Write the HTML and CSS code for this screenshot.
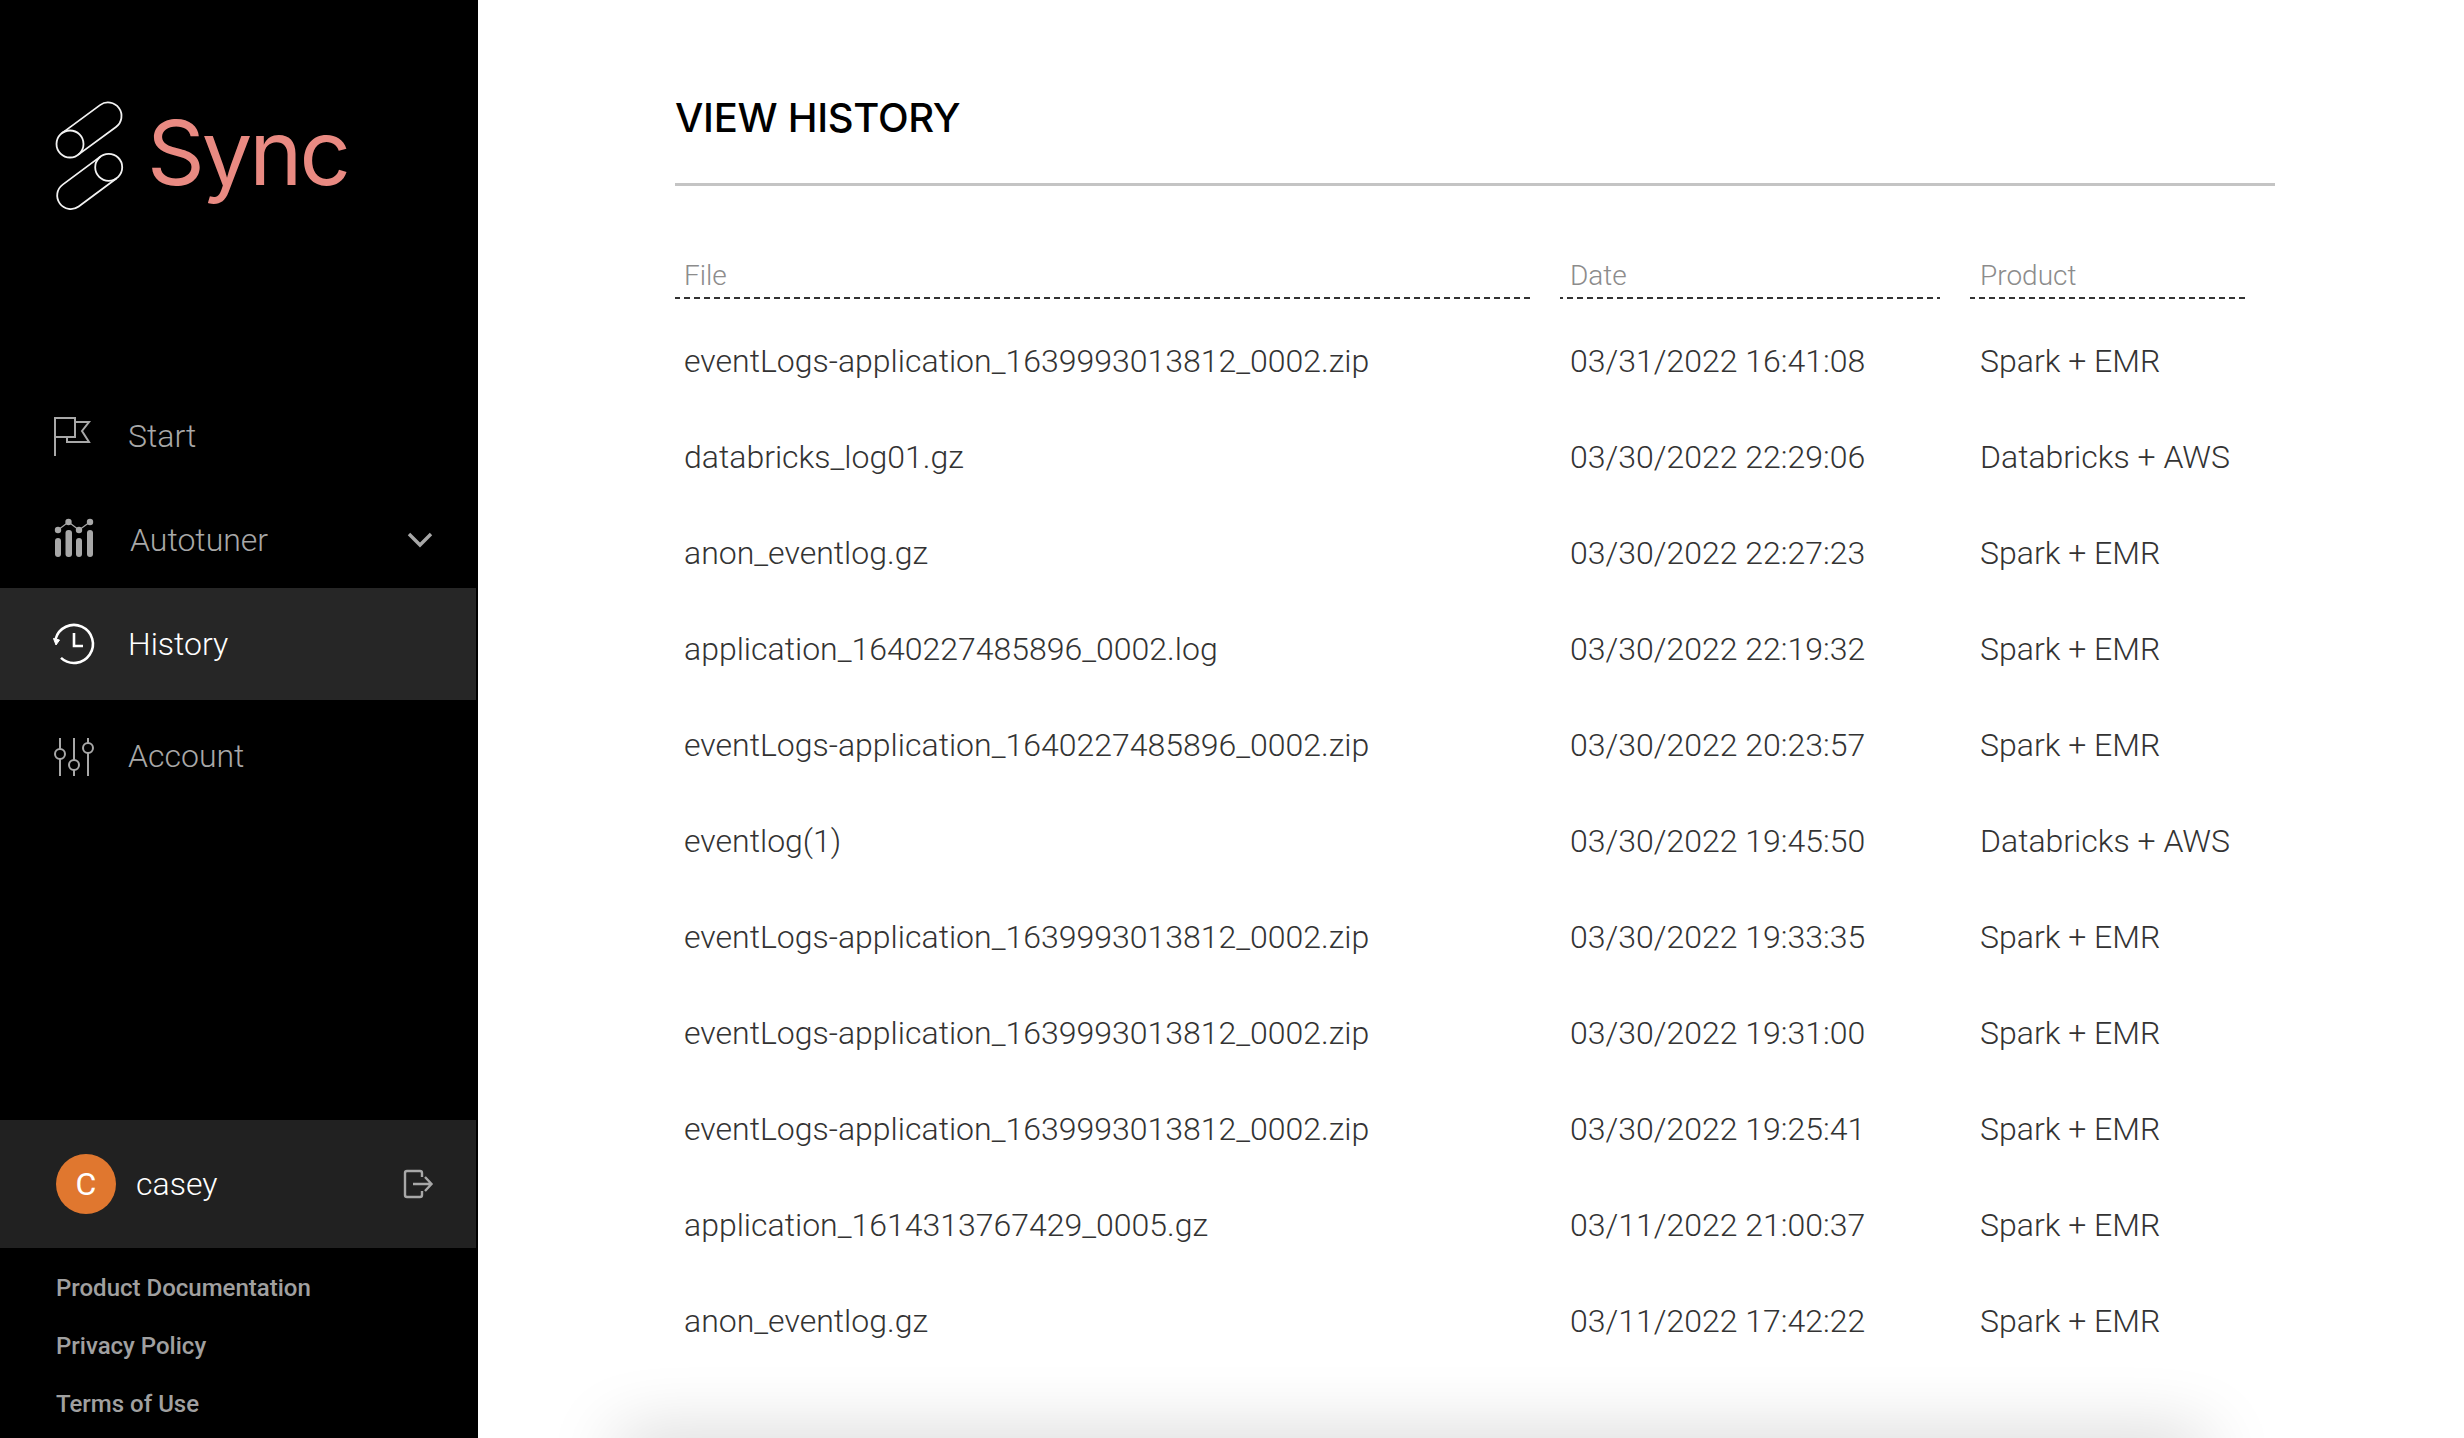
FILE: index.html
```html
<!DOCTYPE html>
<html lang="en">
<head>
    <meta charset="UTF-8">
    <meta name="viewport" content="width=device-width, initial-scale=1.0">
    <title>Sync - View History</title>
    <link rel="stylesheet" href="styles.css">
</head>
<body>
    <aside class="sidebar">
        <div class="logo">
            <svg class="logo-mark" width="90" height="126" viewBox="0 0 90 126" fill="none" stroke="#f2f2f2" stroke-width="1.8">
                <path d="M18 41.1 L56 13.1 A13.5 13.5 0 0 1 72 34.9 L34 62.9"/>
                <circle cx="26" cy="52" r="13.5"/>
                <path d="M56.7 64.4 L18.7 92.6 A13.5 13.5 0 0 0 34.7 114.4 L72.7 86.2"/>
                <circle cx="64.7" cy="75.3" r="13.5"/>
            </svg>
            <span class="logo-text">Sync</span>
        </div>

        <nav class="nav">
            <a class="nav-item nav-start">
                <svg width="60" height="60" viewBox="0 0 60 60" fill="none" stroke="currentColor" stroke-width="2">
                    <path d="M11 50 V12 H31 V31 H11"/>
                    <path d="M32 16 H45 L38 25 L45 36 H23 V31"/>
                </svg>
                <span>Start</span>
            </a>
            <a class="nav-item nav-tuner">
                <svg width="60" height="60" viewBox="0 0 60 60" fill="currentColor">
                    <rect x="11" y="28" width="6" height="19" rx="3"/>
                    <rect x="21.5" y="20" width="6.5" height="27" rx="3"/>
                    <rect x="32" y="28" width="6" height="19" rx="3"/>
                    <rect x="43" y="20" width="6" height="27" rx="3"/>
                    <path d="M14 20 L24.5 12 L35 20 L46 12" fill="none" stroke="currentColor" stroke-width="1.2"/>
                    <circle cx="14" cy="20" r="3.2"/>
                    <circle cx="24.5" cy="12" r="3.2"/>
                    <circle cx="35" cy="20" r="3.2"/>
                    <circle cx="46" cy="12" r="3.2"/>
                </svg>
                <span>Autotuner</span>
                <svg class="chevron" width="28" height="18" viewBox="0 0 28 18" fill="none" stroke="currentColor" stroke-width="3.4">
                    <path d="M3 3 L14 14 L25 3"/>
                </svg>
            </a>
            <a class="nav-item nav-active">
                <svg width="60" height="60" viewBox="0 0 60 60" fill="none" stroke="currentColor" stroke-width="2.6">
                    <path d="M11.6 25 A19 19 0 1 1 17 43.9"/>
                    <path d="M30 19 V32 H39"/>
                    <path d="M9.5 24.5 L15.5 26 L12 31 Z" fill="currentColor" stroke-width="1"/>
                </svg>
                <span>History</span>
            </a>
            <a class="nav-item">
                <svg width="60" height="60" viewBox="0 0 60 60" fill="none" stroke="currentColor" stroke-width="2">
                    <path d="M16 12 V23 M16 33 V50 M30 12 V34 M30 44 V50 M44 12 V17 M44 27 V50"/>
                    <circle cx="16" cy="28" r="5"/>
                    <circle cx="30" cy="39" r="5"/>
                    <circle cx="44" cy="22" r="5"/>
                </svg>
                <span>Account</span>
            </a>
        </nav>

        <div class="sidebar-bottom">
            <div class="user-bar">
                <div class="avatar">C</div>
                <span class="user-name">casey</span>
                <svg class="logout" width="50" height="50" viewBox="0 0 50 50" fill="none" stroke="#a8a8a8" stroke-width="2.4">
                    <path d="M28 17 V13 A2 2 0 0 0 26 11 H13 A2 2 0 0 0 11 13 V35 A2 2 0 0 0 13 37 H26 A2 2 0 0 0 28 35 V31"/>
                    <path d="M19 24 H37 M31 17 L37.5 24 L31 31"/>
                </svg>
            </div>
            <div class="links">
                <a>Product Documentation</a>
                <a>Privacy Policy</a>
                <a>Terms of Use</a>
            </div>
        </div>
    </aside>

    <main class="content">
        <h1>VIEW HISTORY</h1>
        <table class="history">
            <colgroup>
                <col class="col-file">
                <col class="col-date">
                <col class="col-product">
            </colgroup>
            <thead>
                <tr><th>File</th><th>Date</th><th>Product</th></tr>
            </thead>
            <tbody>
                <tr><td>eventLogs-application_1639993013812_0002.zip</td><td>03/31/2022 16:41:08</td><td>Spark + EMR</td></tr>
                <tr><td>databricks_log01.gz</td><td>03/30/2022 22:29:06</td><td>Databricks + AWS</td></tr>
                <tr><td>anon_eventlog.gz</td><td>03/30/2022 22:27:23</td><td>Spark + EMR</td></tr>
                <tr><td>application_1640227485896_0002.log</td><td>03/30/2022 22:19:32</td><td>Spark + EMR</td></tr>
                <tr><td>eventLogs-application_1640227485896_0002.zip</td><td>03/30/2022 20:23:57</td><td>Spark + EMR</td></tr>
                <tr><td>eventlog(1)</td><td>03/30/2022 19:45:50</td><td>Databricks + AWS</td></tr>
                <tr><td>eventLogs-application_1639993013812_0002.zip</td><td>03/30/2022 19:33:35</td><td>Spark + EMR</td></tr>
                <tr><td>eventLogs-application_1639993013812_0002.zip</td><td>03/30/2022 19:31:00</td><td>Spark + EMR</td></tr>
                <tr><td>eventLogs-application_1639993013812_0002.zip</td><td>03/30/2022 19:25:41</td><td>Spark + EMR</td></tr>
                <tr><td>application_1614313767429_0005.gz</td><td>03/11/2022 21:00:37</td><td>Spark + EMR</td></tr>
                <tr><td>anon_eventlog.gz</td><td>03/11/2022 17:42:22</td><td>Spark + EMR</td></tr>
            </tbody>
        </table>
        <div class="bottom-shadow"></div>
    </main>
</body>
</html>
```
FILE: styles.css
```css
* {
    margin: 0;
    padding: 0;
    box-sizing: border-box;
}

body {
    display: flex;
    height: 100vh;
    overflow: hidden;
    background-color: #FFFFFF;
    font-family: 'Roboto', sans-serif;
}

/* sidebar */
.sidebar {
    width: 478px;
    flex-shrink: 0;
    padding-right: 2px;
    display: flex;
    flex-direction: column;
    background-color: #000000;
}

.logo {
    height: 384px;
    padding: 92px 0 0 44px;
    display: flex;
    align-items: flex-start;
    gap: 13px;
}

.logo-text {
    margin-top: 11px;
    font-family: 'Inter', sans-serif;
    font-size: 90px;
    font-weight: 400;
    line-height: 100px;
    letter-spacing: -3px;
    color: #E98A82;
}

.nav-item {
    height: 112px;
    padding-left: 44px;
    display: flex;
    align-items: center;
    gap: 24px;
    font-size: 32px;
    font-weight: 300;
    color: #A8A8A8;
}

.nav-start {
    height: 104px;
}

.nav-tuner {
    height: 100px;
    padding-top: 3px;
    padding-right: 42px;
}

.nav-tuner span {
    margin-left: 2px;
}

.chevron {
    margin-left: auto;
}

.nav-active {
    background-color: #262626;
    color: #FFFFFF;
}

.sidebar-bottom {
    margin-top: auto;
}

.user-bar {
    height: 128px;
    padding: 0 32px 0 56px;
    display: flex;
    align-items: center;
    background-color: #212121;
}

.avatar {
    width: 60px;
    height: 60px;
    border-radius: 50%;
    display: flex;
    align-items: center;
    justify-content: center;
    background-color: #E0772F;
    color: #FFFFFF;
    font-size: 32px;
}

.user-name {
    margin-left: 20px;
    font-size: 32px;
    font-weight: 300;
    color: #FFFFFF;
}

.logout {
    margin-left: auto;
    margin-top: 2px;
}

.links {
    height: 190px;
    padding: 11px 0 0 56px;
}

.links a {
    display: block;
    height: 58px;
    line-height: 58px;
    font-size: 24px;
    font-weight: 500;
    color: #A0A0A0;
}

/* main content */
.content {
    flex: 1;
    position: relative;
    padding: 0 190px 0 197px;
}

h1 {
    padding: 94px 0 41px;
    border-bottom: 3px solid #C4C4C4;
    font-family: 'Inter', sans-serif;
    font-size: 40px;
    font-weight: 500;
    line-height: 48px;
    letter-spacing: -0.3px;
    color: #000000;
}

.history {
    width: 1630px;
    margin: 0 0 0 -30px;
    table-layout: fixed;
    border-collapse: separate;
    border-spacing: 30px 0;
}

.col-file {
    width: 855px;
}

.col-date {
    width: 380px;
}

.col-product {
    width: 275px;
}

.history th {
    height: 113px;
    padding: 0 0 5px 9px;
    vertical-align: bottom;
    text-align: left;
    background: linear-gradient(to right, #333333 6px, transparent 6px) -1px bottom / 10px 2px repeat-x;
    font-size: 28px;
    font-weight: 300;
    line-height: 36px;
    color: #8C8C8C;
}

.history th:nth-child(2) {
    background-position-x: -3px;
}

.history td {
    height: 96px;
    padding-left: 9px;
    font-size: 32px;
    font-weight: 300;
    white-space: nowrap;
    color: #333333;
}

.history th + th,
.history td + td {
    padding-left: 10px;
}

.history tbody tr:first-child td {
    height: 110px;
    padding-top: 14px;
}

.bottom-shadow {
    position: absolute;
    left: 140px;
    right: 260px;
    top: 1438px;
    height: 40px;
    box-shadow: 0 0 70px rgba(0, 0, 0, 0.22);
}
```
